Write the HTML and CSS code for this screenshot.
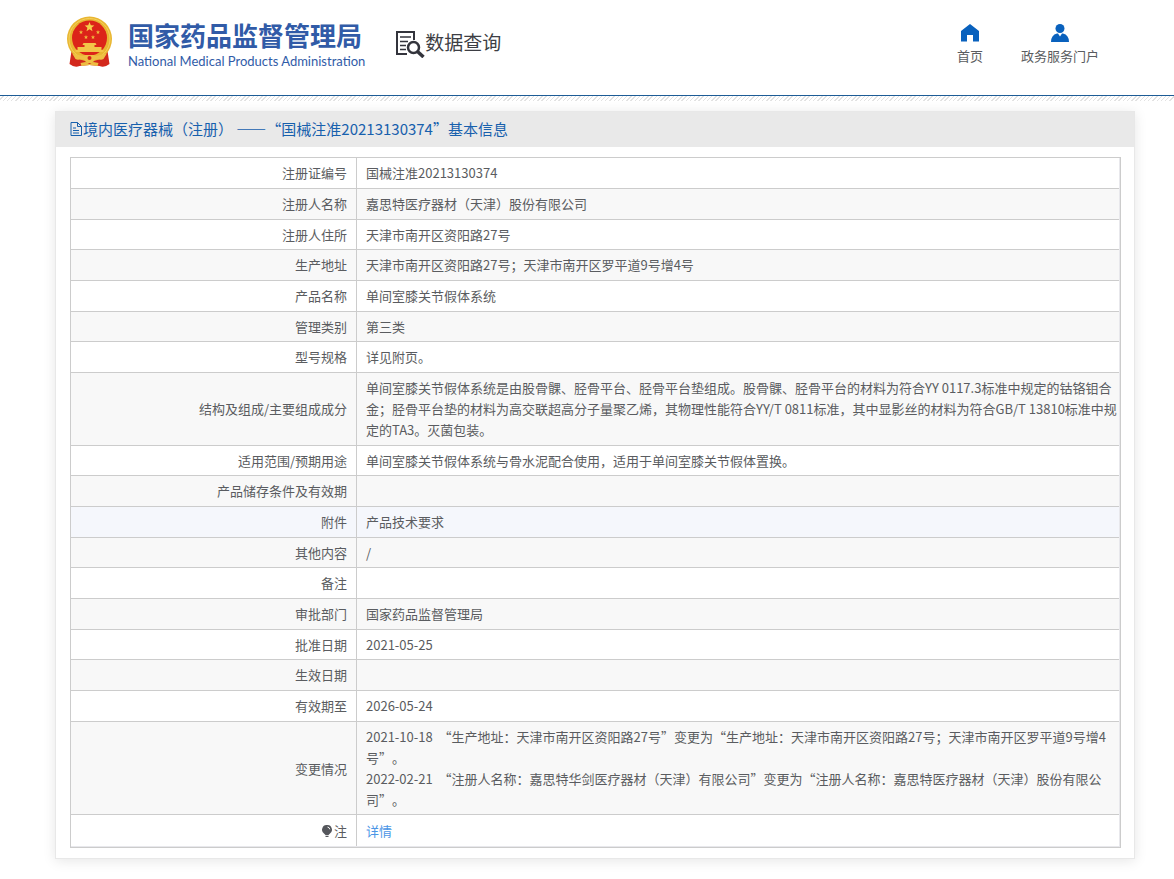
FILE: index.html
```html
<!DOCTYPE html>
<html lang="zh-CN">
<head>
  <meta charset="UTF-8">
  <meta name="viewport" content="width=device-width, initial-scale=1.0">
  <title>国家药品监督管理局 - 数据查询</title>
  <link rel="stylesheet" href="styles.css">
</head>
<body>
  <header class="header">
    <a class="logo" href="#">
      <svg class="emblem" viewBox="0 0 46 52" aria-hidden="true">
        <path d="M5 35L3 48q5 4 10 2l10-1 10 1q5 2 10-2l-2-13z" fill="#d3281c"/>
        <circle cx="23" cy="23" r="22.500" fill="#e9b632"/>
        <circle cx="23" cy="23" r="20.500" fill="none" stroke="#f4d05c" stroke-width="1"/>
        <circle cx="23" cy="22" r="17.500" fill="#dc2419"/>
        <path d="M23 6l1.300 3.300 3.500.2-2.700 2.300.9 3.400-3-1.900-3 1.900.9-3.400-2.700-2.300 3.500-.2z" fill="#f5cf4a"/>
        <g fill="#f0b93c">
          <path id="star" d="M14.500 14l.6 1.400 1.500.1-1.200 1 .4 1.500-1.300-.8-1.300.8.4-1.500-1.200-1 1.500-.1z"/>
          <use href="#star" x="17"/>
          <use href="#star" x="5" y="5"/>
          <use href="#star" x="12" y="5"/>
        </g>
        <path d="M17 27h12l1 2h-2v2h7v3h2v2H9v-2h2v-3h7v-2h-2z" fill="#f3c548"/>
        <path d="M6 38c6 0 9 3 13 1h8c4 2 7-1 13-1l-3 5c-3 2-6-1-9 1l-2 3h-6l-2-3c-3-2-6 1-9-1z" fill="#efc045"/>
        <circle cx="23" cy="42" r="2" fill="#d3281c"/>
        <path d="M14 47l5-1 4 2 4-2 5 1-1 3-8-1-8 1z" fill="#edbd42"/>
      </svg>
      <span class="logo-text">
        <strong class="logo-cn">国家药品监督管理局</strong>
        <span class="logo-en">National Medical Products Administration</span>
      </span>
    </a>

    <a class="section" href="#">
      <svg class="section-icon" viewBox="0 0 30 28" aria-hidden="true">
        <g fill="none" stroke="#33343c">
          <path d="M12 24H2V2h17v8" stroke-width="2"/>
          <path d="M5 7h11M5 11.500h8M5 15.500h6M5 19.500h6" stroke-width="1.500"/>
          <circle cx="18.500" cy="17.500" r="5.500" stroke-width="2.500"/>
          <path d="M22.500 21.500l6 5.500" stroke-width="3.500"/>
        </g>
      </svg>
      <span>数据查询</span>
    </a>

    <nav class="nav">
      <a href="#">
        <svg viewBox="0 0 18 18" aria-hidden="true"><path d="M9 0L0 7v10.500h6V11h6v6.500h6V7z"/></svg>
        <span>首页</span>
      </a>
      <a href="#">
        <svg viewBox="0 0 18 18" aria-hidden="true"><circle cx="9" cy="4.500" r="4.500"/><path d="M0 18q0-7 6-8.500h1l2 3 2-3h1q6 1.500 6 8.500z"/></svg>
        <span>政务服务门户</span>
      </a>
    </nav>
  </header>

  <main class="card">
    <h1 class="card-title">
      <svg viewBox="0 0 12 14" aria-hidden="true"><path d="M1 .500h6.500L11.500 4.500v9H1zM7.500.500v4h4M3 6h3M3 8.500h6M3 11h6"/></svg>
      <span>境内医疗器械（注册） ——“国械注准20213130374”基本信息</span>
    </h1>

    <div class="table-box">
      <table>
        <tbody>
          <tr><th scope="row">注册证编号</th><td>国械注准20213130374</td></tr>
          <tr><th scope="row">注册人名称</th><td>嘉思特医疗器材（天津）股份有限公司</td></tr>
          <tr><th scope="row">注册人住所</th><td>天津市南开区资阳路27号</td></tr>
          <tr><th scope="row">生产地址</th><td>天津市南开区资阳路27号；天津市南开区罗平道9号增4号</td></tr>
          <tr><th scope="row">产品名称</th><td>单间室膝关节假体系统</td></tr>
          <tr><th scope="row">管理类别</th><td>第三类</td></tr>
          <tr><th scope="row">型号规格</th><td>详见附页。</td></tr>
          <tr><th scope="row">结构及组成/主要组成成分</th><td>单间室膝关节假体系统是由股骨髁、胫骨平台、胫骨平台垫组成。股骨髁、胫骨平台的材料为符合YY 0117.3标准中规定的钴铬钼合金；胫骨平台垫的材料为高交联超高分子量聚乙烯，其物理性能符合YY/T 0811标准，其中显影丝的材料为符合GB/T 13810标准中规定的TA3。灭菌包装。</td></tr>
          <tr><th scope="row">适用范围/预期用途</th><td>单间室膝关节假体系统与骨水泥配合使用，适用于单间室膝关节假体置换。</td></tr>
          <tr><th scope="row">产品储存条件及有效期</th><td></td></tr>
          <tr class="active"><th scope="row">附件</th><td>产品技术要求</td></tr>
          <tr><th scope="row">其他内容</th><td>/</td></tr>
          <tr><th scope="row">备注</th><td></td></tr>
          <tr><th scope="row">审批部门</th><td>国家药品监督管理局</td></tr>
          <tr><th scope="row">批准日期</th><td>2021-05-25</td></tr>
          <tr><th scope="row">生效日期</th><td></td></tr>
          <tr><th scope="row">有效期至</th><td>2026-05-24</td></tr>
          <tr>
            <th scope="row">变更情况</th>
            <td>2021-10-18&nbsp; “生产地址：天津市南开区资阳路27号”变更为“生产地址：天津市南开区资阳路27号；天津市南开区罗平道9号增4号”。<br>2022-02-21&nbsp; “注册人名称：嘉思特华剑医疗器材（天津）有限公司”变更为“注册人名称：嘉思特医疗器材（天津）股份有限公司”。</td>
          </tr>
          <tr class="note">
            <th scope="row"><svg viewBox="0 0 10 12" aria-hidden="true"><path d="M5 0a4.700 4.700 0 0 0-3 8.500L3.500 10h3L8 8.500A4.700 4.700 0 0 0 5 0zM3.500 10.800h3v1.200h-3z"/><path d="M5.500 2q2 .3 2.300 2.300" fill="none" stroke="#fff"/></svg>注</th>
            <td><a href="#">详情</a></td>
          </tr>
        </tbody>
      </table>
    </div>
  </main>
</body>
</html>
```
FILE: styles.css
```css
* {
  margin: 0;
  padding: 0;
  box-sizing: border-box;
}

body {
  background: #fff;
  color: #5a5c60;
  font-family: "Noto Sans CJK SC", sans-serif;
  font-size: 13px;
  line-height: 21px;
  text-spacing-trim: space-all;
}

a {
  color: inherit;
  text-decoration: none;
}

/* header */
.header {
  display: flex;
  align-items: flex-start;
  height: 102px;
  padding: 16px 75px 0 66px;
  background: linear-gradient(#1d5c96, #1d5c96) 0 95px / 100% 1px no-repeat,
    repeating-linear-gradient(135deg, #fff 0 2px, #e2e2e2 2px 3px) 0 96px / 100% 5px no-repeat;
}

.logo {
  display: flex;
  gap: 15px;
}

.emblem {
  width: 47px;
  height: 52px;
}

.logo-text {
  display: flex;
  flex-direction: column;
  padding-top: 3px;
  color: #315ba7;
}

.logo-cn {
  font-size: 26px;
  line-height: 32px;
}

.logo-en {
  font-family: Lato, sans-serif;
  font-size: 13px;
  line-height: 20px;
}

.section {
  display: flex;
  margin: 14px 0 0 30px;
  color: #3d3e44;
  font-size: 19px;
  line-height: 24px;
}

.section-icon {
  width: 30px;
  height: 28px;
}

.nav {
  display: flex;
  gap: 38px;
  margin-left: auto;
  padding-top: 8px;
}

.nav a {
  display: flex;
  flex-direction: column;
  align-items: center;
  gap: 3px;
}

.nav svg {
  width: 18px;
  height: 18px;
  fill: #0961bd;
}

/* detail card */
.card {
  margin: 9px 39px 20px 55px;
  border: 1px solid #e8e8e8;
  box-shadow: 0 2px 12px rgba(0, 0, 0, 0.1);
}

.card-title {
  display: flex;
  align-items: center;
  gap: 1px;
  padding: 6px 14px 8px;
  background: #e9e9e9;
  color: #1760ad;
  font-size: 15px;
  font-weight: normal;
}

.card-title svg {
  width: 12px;
  height: 14px;
  fill: none;
  stroke: #1760ad;
}

.table-box {
  margin: 10px 13px 10px 14px;
  padding: 0 1px 1px 0;
  border: 1px solid #ccc;
  background: #e8e8ec;
}

table {
  width: 100%;
  border-spacing: 0;
}

tr {
  background: #fff;
}

tr:nth-child(even) {
  background: #f8f8f8;
}

tr.active {
  background: #f5f7fc;
}

th,
td {
  height: 31px;
  padding: 4px 9px 5px;
  border-bottom: 1px solid #ccc;
  font-weight: normal;
}

tr:nth-child(3n) > * {
  height: 30px;
  padding-bottom: 4px;
}

th {
  width: 286px;
  border-right: 1px solid #ccc;
  text-align: right;
}

td {
  padding-right: 0;
  text-align: left;
}

.note > * {
  height: 31px;
  border-bottom: 0;
}

.note svg {
  width: 10px;
  height: 12px;
  margin-right: 2px;
  fill: #55575c;
  vertical-align: -1px;
}

.note a {
  color: #4b96e6;
}
```
